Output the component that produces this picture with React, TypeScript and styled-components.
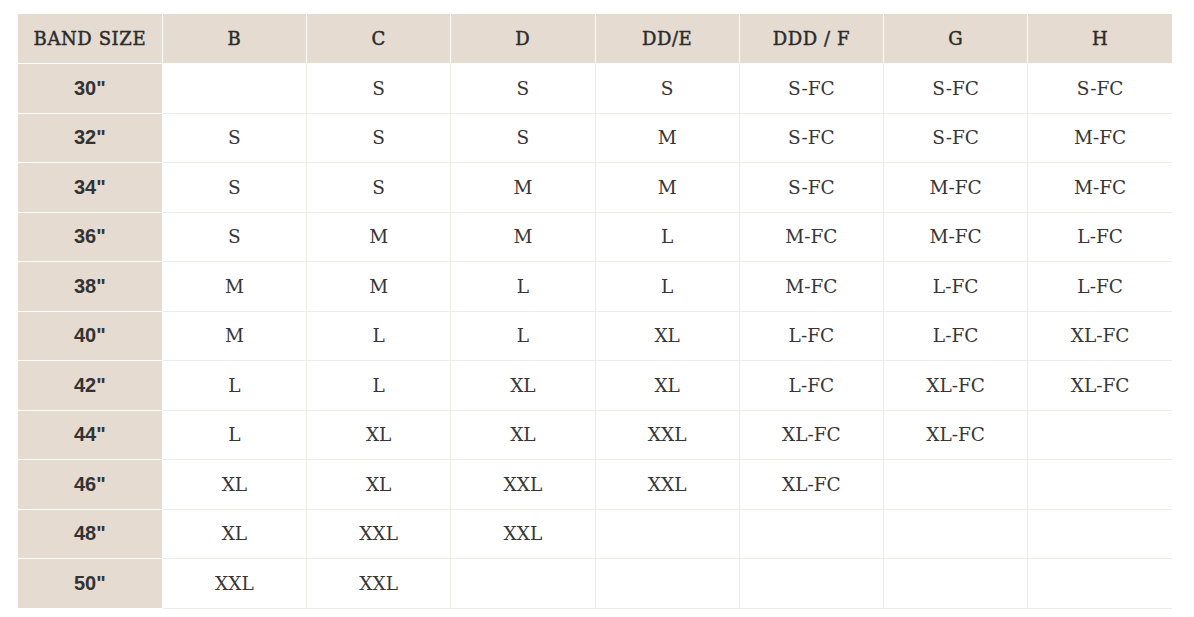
import styled, { createGlobalStyle } from "styled-components";

const GlobalStyle = createGlobalStyle`
  body {
    margin: 0;
    background: #ffffff;
  }
`;

const Page = styled.div`
  padding: 14px 22px 0 18px;
`;

const Table = styled.table`
  width: 1154px;
  border-collapse: collapse;
  table-layout: fixed;
`;

const HeadCell = styled.th`
  height: 49px;
  padding: 0;
  background: #e5dbd1;
  border: 1px solid #ffffff;
  border-top: none;
  color: #2b2b2b;
  font-family: "DejaVu Serif", "Liberation Serif", serif;
  font-weight: 400;
  font-size: 18px;
  letter-spacing: 0.6px;
  -webkit-text-stroke: 0.45px #2b2b2b;
  text-align: center;
  &:first-child {
    border-left: none;
  }
  &:last-child {
    border-right: none;
  }
`;

const BandCell = styled.td`
  height: 48.5px;
  padding: 0;
  background: #e5dbd1;
  border: 1px solid #ffffff;
  border-left: none;
  color: #333333;
  font-family: "Liberation Sans", Arial, sans-serif;
  font-weight: 700;
  font-size: 20px;
  text-align: center;
`;

const SizeCell = styled.td<{ $first?: boolean }>`
  padding: 0;
  border: 1px solid #efebe7;
  border-top-color: ${(p) => (p.$first ? "#ffffff" : "#efebe7")};
  color: #363636;
  font-family: "DejaVu Serif", "Liberation Serif", serif;
  font-size: 18.5px;
  text-align: center;
  &:last-child {
    border-right: none;
  }
`;

const cups = ["B", "C", "D", "DD/E", "DDD / F", "G", "H"];

const rows: [string, string[]][] = [
  ['30"', ["", "S", "S", "S", "S-FC", "S-FC", "S-FC"]],
  ['32"', ["S", "S", "S", "M", "S-FC", "S-FC", "M-FC"]],
  ['34"', ["S", "S", "M", "M", "S-FC", "M-FC", "M-FC"]],
  ['36"', ["S", "M", "M", "L", "M-FC", "M-FC", "L-FC"]],
  ['38"', ["M", "M", "L", "L", "M-FC", "L-FC", "L-FC"]],
  ['40"', ["M", "L", "L", "XL", "L-FC", "L-FC", "XL-FC"]],
  ['42"', ["L", "L", "XL", "XL", "L-FC", "XL-FC", "XL-FC"]],
  ['44"', ["L", "XL", "XL", "XXL", "XL-FC", "XL-FC", ""]],
  ['46"', ["XL", "XL", "XXL", "XXL", "XL-FC", "", ""]],
  ['48"', ["XL", "XXL", "XXL", "", "", "", ""]],
  ['50"', ["XXL", "XXL", "", "", "", "", ""]],
];

export default function App() {
  return (
    <Page>
      <GlobalStyle />
      <Table>
        <thead>
          <tr>
            <HeadCell>BAND SIZE</HeadCell>
            {cups.map((c) => (
              <HeadCell key={c}>{c}</HeadCell>
            ))}
          </tr>
        </thead>
        <tbody>
          {rows.map(([band, sizes], i) => (
            <tr key={band}>
              <BandCell>{band}</BandCell>
              {sizes.map((s, j) => (
                <SizeCell key={j} $first={i === 0}>
                  {s}
                </SizeCell>
              ))}
            </tr>
          ))}
        </tbody>
      </Table>
    </Page>
  );
}
